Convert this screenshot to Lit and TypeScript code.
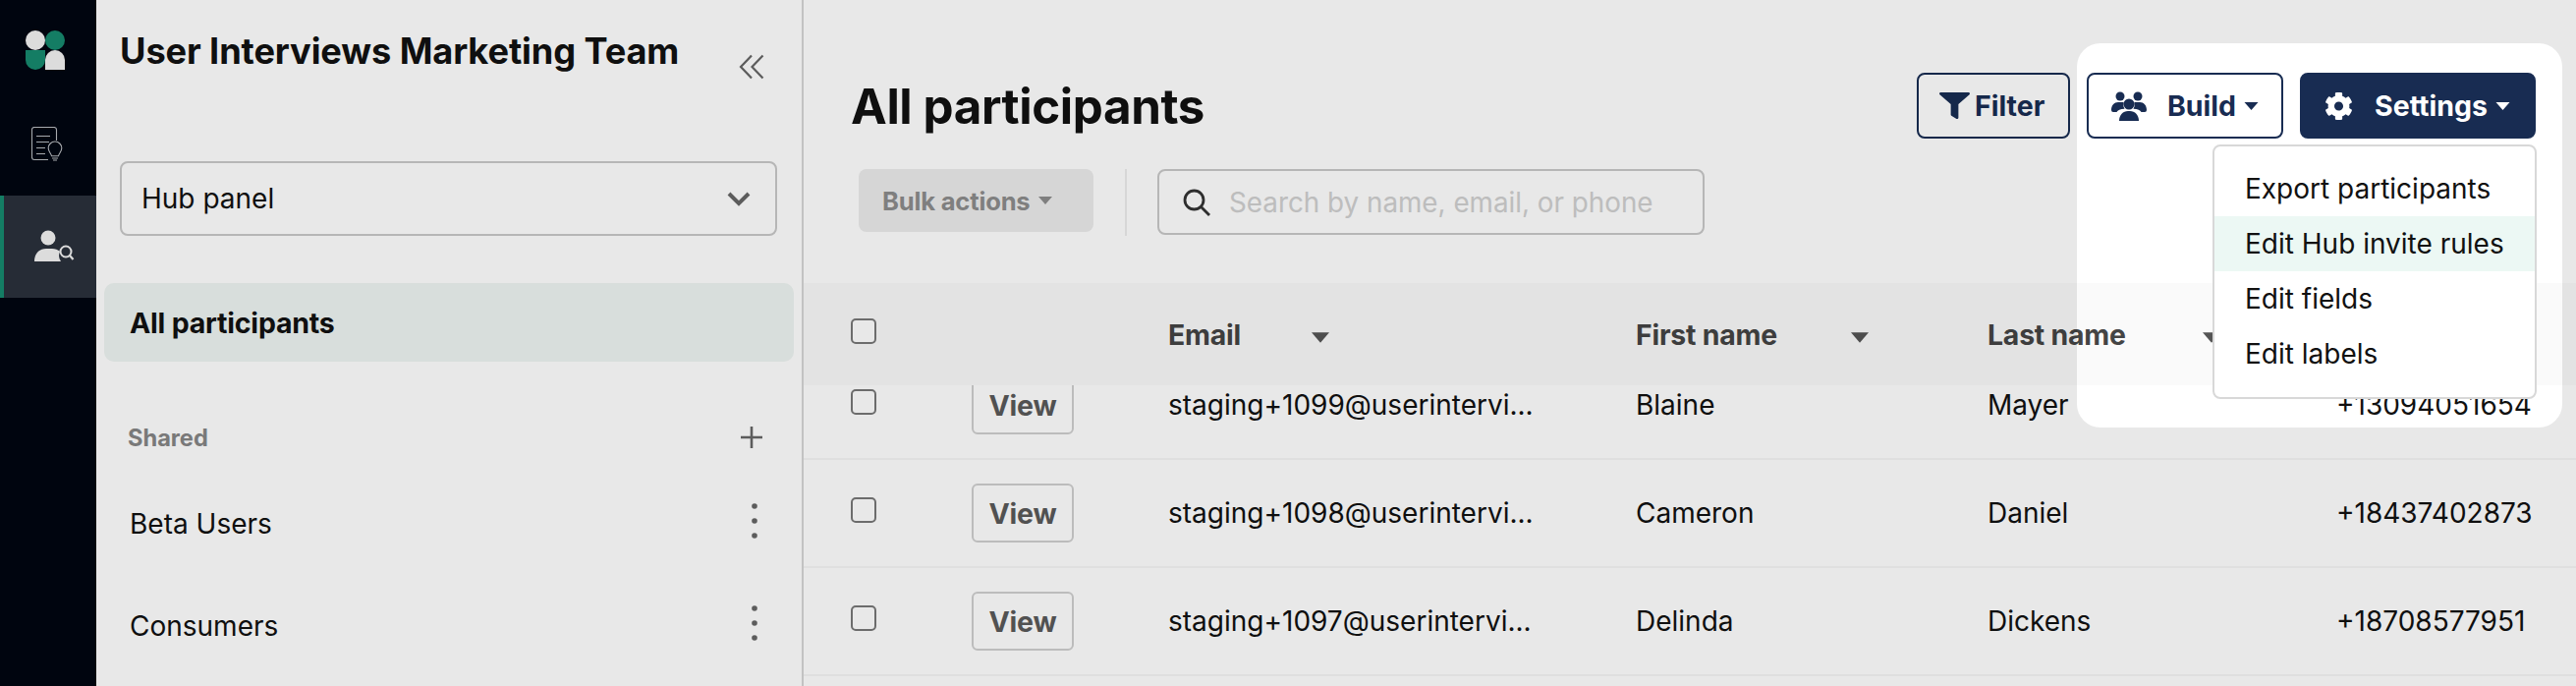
import { LitElement, html, css } from "lit";
import { customElement } from "lit/decorators.js";

const FUNNEL = "M487.976 0H24.028C2.71 0-8.047 25.866 7.058 40.971L192 225.941V432c0 7.831 3.821 15.17 10.237 19.662l80 55.98C298.02 518.69 320 507.493 320 487.98V225.941l184.947-184.97C520.021 25.896 509.338 0 487.976 0z";
const GEAR = "M487.4 315.7l-42.6-24.6c4.3-23.2 4.3-47 0-70.2l42.6-24.6c4.9-2.8 7.1-8.6 5.5-14-11.1-35.6-30-67.8-54.7-94.6-3.8-4.1-10-5.1-14.8-2.3L380.8 110c-17.9-15.4-38.5-27.3-60.8-35.1V25.8c0-5.6-3.9-10.5-9.4-11.7-36.7-8.2-74.3-7.8-109.2 0-5.5 1.2-9.4 6.1-9.4 11.7V75c-22.2 7.9-42.8 19.8-60.8 35.1L88.7 85.5c-4.9-2.8-11-1.9-14.8 2.3-24.7 26.7-43.6 58.9-54.7 94.6-1.7 5.4.6 11.2 5.5 14L67.3 221c-4.3 23.2-4.3 47 0 70.2l-42.6 24.6c-4.9 2.8-7.1 8.6-5.5 14 11.1 35.6 30 67.8 54.7 94.6 3.8 4.1 10 5.1 14.8 2.3l42.6-24.6c17.9 15.4 38.5 27.3 60.8 35.1v49.2c0 5.6 3.9 10.5 9.4 11.7 36.7 8.2 74.3 7.8 109.2 0 5.5-1.2 9.4-6.1 9.4-11.7v-49.2c22.2-7.9 42.8-19.8 60.8-35.1l42.6 24.6c4.9 2.8 11 1.9 14.8-2.3 24.7-26.7 43.6-58.9 54.7-94.6 1.5-5.5-.7-11.3-5.6-14.1zM256 336c-44.1 0-80-35.9-80-80s35.9-80 80-80 80 35.9 80 80-35.9 80-80 80z";

const caret = (cls: string) => html`<svg class=${cls} viewBox="0 0 14 8"><path d="M0 0h14L7 8z" fill="currentColor"/></svg>`;

const rows = [
  { email: "staging+1099@userintervi...", first: "Blaine", last: "Mayer", phone: "+13094051654" },
  { email: "staging+1098@userintervi...", first: "Cameron", last: "Daniel", phone: "+18437402873" },
  { email: "staging+1097@userintervi...", first: "Delinda", last: "Dickens", phone: "+18708577951" },
];

@customElement("app-root")
export class AppRoot extends LitElement {
  static styles = css`
    :host {
      display: block;
      position: relative;
      width: 2622px;
      height: 698px;
      overflow: hidden;
      background: #fff;
      color: #111;
      font-family: Inter, "Liberation Sans", sans-serif;
      font-size: 28px;
    }
    * { box-sizing: border-box; }
    .layout { display: flex; height: 698px; }

    .rail { width: 98px; flex: none; background: #010611; display: flex; flex-direction: column; }
    .logo { display: block; width: 40px; height: 40px; margin: 31px 0 0 26px; }
    .doc { display: block; width: 32px; height: 36px; margin: 58px 0 0 32px; }
    .rail-active {
      margin-top: 34px; height: 104px; background: #2a313c;
      border-left: 4px solid #178a6e; display: flex;
    }
    .usericon { width: 46px; height: 34px; margin: 35px 0 0 30px; }

    .side {
      width: 720px; flex: none; border-right: 2px solid #d6d6d6;
      display: flex; flex-direction: column; padding: 0 8px;
    }
    .team-row { display: flex; justify-content: space-between; padding: 28px 0 0 16px; height: 164px; }
    .team { margin: 0; font-size: 36.2px; line-height: 48px; font-weight: 700; letter-spacing: -0.1px; white-space: nowrap; }
    .collapse { width: 26px; height: 26px; margin: 27px 30px 0 0; color: #666; flex: none; }
    .select {
      margin: 0 17px 0 16px; height: 76px; border: 2px solid #c8c8c8; border-radius: 8px;
      display: flex; align-items: center; justify-content: space-between; padding: 0 25px 0 20px;
    }
    .chev { width: 24px; height: 15px; color: #666; }
    .nav-main {
      margin: 48px 0 0 0; height: 80px; border-radius: 10px; background: #eef5f2;
      display: flex; align-items: center; padding-left: 26px; font-weight: 700; font-size: 28.5px; letter-spacing: -0.2px;
    }
    .shared {
      margin-top: 59px; height: 36px; padding: 0 31px 0 24px;
      display: flex; align-items: center; justify-content: space-between;
      font-size: 23.6px; font-weight: 700; color: #858585;
    }
    .plus { width: 24px; height: 24px; color: #666; }
    .list-item {
      height: 104px; display: flex; align-items: center; justify-content: space-between;
      padding: 0 36px 0 26px;
    }
    .list-first { margin-top: 18px; }
    .dots { width: 8px; height: 38px; color: #666; margin-top: -6px; }

    .main { flex: 1; display: flex; flex-direction: column; min-width: 0; }
    .head-row { display: flex; align-items: center; height: 67px; margin-top: 74px; padding-left: 48px; }
    .title { margin: 0; font-size: 49.3px; font-weight: 700; letter-spacing: -0.4px; flex: 1; }
    .btn {
      height: 67px; border-radius: 8px; border: 2.5px solid #182c52; color: #182c52;
      background: #fff; display: flex; align-items: center; font-weight: 700; font-size: 28.5px;
    }
    .btn-filter { width: 156px; padding-left: 21px; gap: 5px; margin-right: 17px; }
    .btn-filter svg { width: 31px; height: 27px; flex: none; }
    .btn-build { width: 200px; padding-left: 23px; margin-right: 17px; }
    .btn-build .ic { width: 36px; height: 30px; margin-right: 21px; }
    .btn-settings { width: 240px; padding-left: 23px; background: #182c52; color: #fff; margin-right: 41px; }
    .btn-settings .ic { width: 29px; height: 30px; margin-right: 22px; }
    .caret-b { width: 15px; height: 8px; margin-left: 8px; }

    .tools { display: flex; align-items: flex-start; margin-top: 31px; height: 68px; padding-left: 56px; }
    .bulk {
      width: 239px; height: 64px; background: #ececec; border-radius: 8px; color: #8c8c8c;
      display: flex; align-items: center; padding-left: 24px; font-weight: 700; font-size: 25.6px; letter-spacing: -0.2px;
    }
    .caret-s { width: 14px; height: 8px; margin-left: 8px; }
    .sep { width: 2px; height: 68px; background: #ededed; margin: 0 31px 0 32px; }
    .search {
      width: 557px; height: 67px; border: 2px solid #c8c8c8; border-radius: 8px;
      display: flex; align-items: center; padding-left: 23px; color: #d0d0d0; font-size: 27.8px;
    }
    .search svg { width: 30px; height: 30px; margin-right: 18px; color: #333; flex: none; }

    .thead, .row {
      display: grid; grid-template-columns: 123px 200px 476px 358px 355px 1fr;
      padding-left: 48px;
    }
    .thead {
      position: relative; z-index: 1; margin-top: 48px; height: 104px; background: #fafafa;
      align-items: center; font-weight: 700; color: #444; font-size: 28.4px; letter-spacing: -0.2px;
    }
    .th { display: flex; align-items: center; justify-content: space-between; width: 164px; }
    .th-wide { width: 237px; }
    .sort { width: 18px; height: 11px; color: #555; margin-top: 6px; }
    .rows { margin-top: -34px; }
    .row { height: 110px; align-items: center; border-bottom: 2px solid #f6f6f6; }
    .cb {
      display: block; width: 26px; height: 26px; border: 2px solid #777; border-radius: 5px;
      background: #fff; margin-top: -6px;
    }
    .view {
      width: 104px; height: 60px; border: 2px solid #cfcfcf; border-radius: 6px;
      display: flex; align-items: center; justify-content: center;
      font-weight: 700; font-size: 28.5px; color: #5a5a5a; letter-spacing: -0.2px;
    }
    .menu {
      position: absolute; left: 2252px; top: 147px; width: 330px; height: 259px;
      background: #fff; border: 2px solid #d8d8d8; border-radius: 8px; padding: 15px 0; z-index: 2;
    }
    .mi { height: 56px; display: flex; align-items: center; padding: 0 0 1px 31px; white-space: nowrap; }
    .mi-on { background: #ecf8f4; }
    .spot {
      position: absolute; left: 2114px; top: 44px; width: 494px; height: 391px;
      border-radius: 24px; box-shadow: 0 0 0 4000px rgba(0,0,0,0.09); z-index: 3; pointer-events: none;
    }
  `;

  render() {
    return html`
      <div class="layout">
        <nav class="rail">
          <svg class="logo" viewBox="0 0 40 40">
            <circle cx="10" cy="10" r="10" fill="#f2f2f2"/>
            <circle cx="30" cy="10" r="10" fill="#178a6e"/>
            <path d="M0 20h20v10a10 10 0 0 1-20 0z" fill="#178a6e"/>
            <path d="M20 40V30a10 10 0 0 1 20 0v10z" fill="#f2f2f2"/>
          </svg>
          <svg class="doc" viewBox="0 0 32 36" fill="none" stroke="#b9bcc0" stroke-width="1.1">
            <path d="M17 33.5H3a2.5 2.5 0 0 1-2.5-2.5V3A2.5 2.5 0 0 1 3 .5h20A2.5 2.5 0 0 1 25.5 3v11"/>
            <path d="M5 9.5h14M5 15.5h13M5 21.5h9M5 27.5h9"/>
            <path d="M24 15a6.8 6.8 0 0 0-6.8 6.8c0 3.2 2.6 5 3.4 8h6.8c.8-3 3.4-4.8 3.4-8A6.8 6.8 0 0 0 24 15z"/>
            <path d="M21 32h6M22 34h4"/>
          </svg>
          <div class="rail-active">
            <svg class="usericon" viewBox="0 0 46 34">
              <circle cx="15" cy="8" r="7.5" fill="#f2f2f2"/>
              <path d="M1 32c0-8 5-13 12-13h6c3 0 6 1 8 3a10 10 0 0 0 1 10z" fill="#f2f2f2"/>
              <circle cx="33" cy="22" r="5.5" fill="none" stroke="#f2f2f2" stroke-width="2"/>
              <path d="M37 26l3.5 4" stroke="#f2f2f2" stroke-width="2.2" fill="none"/>
            </svg>
          </div>
        </nav>

        <aside class="side">
          <div class="team-row">
            <h2 class="team">User Interviews Marketing Team</h2>
            <svg class="collapse" viewBox="0 0 26 26" fill="none" stroke="currentColor" stroke-width="2.2">
              <path d="M13 1.5L2 13l11 11.5M24.5 1.5L13.5 13l11 11.5"/>
            </svg>
          </div>
          <div class="select">
            <span>Hub panel</span>
            <svg class="chev" viewBox="0 0 24 15" fill="none" stroke="currentColor" stroke-width="4"><path d="M2 2l10 10L22 2"/></svg>
          </div>
          <div class="nav-main">All participants</div>
          <div class="shared">
            <span>Shared</span>
            <svg class="plus" viewBox="0 0 24 24" stroke="currentColor" stroke-width="2.6"><path d="M12 1v22M1 12h22"/></svg>
          </div>
          <div class="list-item list-first">
            <span>Beta Users</span>
            <svg class="dots" viewBox="0 0 8 38" fill="currentColor"><circle cx="4" cy="4" r="2.8"/><circle cx="4" cy="19" r="2.8"/><circle cx="4" cy="34" r="2.8"/></svg>
          </div>
          <div class="list-item">
            <span>Consumers</span>
            <svg class="dots" viewBox="0 0 8 38" fill="currentColor"><circle cx="4" cy="4" r="2.8"/><circle cx="4" cy="19" r="2.8"/><circle cx="4" cy="34" r="2.8"/></svg>
          </div>
        </aside>

        <main class="main">
          <div class="head-row">
            <h1 class="title">All participants</h1>
            <div class="btn btn-filter">
              <svg viewBox="0 0 512 512" preserveAspectRatio="none"><path d=${FUNNEL} fill="currentColor"/></svg>
              <span>Filter</span>
            </div>
            <div class="btn btn-build">
              <svg class="ic" viewBox="0 0 36 30" fill="currentColor">
                <circle cx="9" cy="5" r="4.5"/><circle cx="27" cy="5" r="4.5"/><circle cx="18" cy="13" r="5.5"/>
                <path d="M0 19c0-5 3-8 7-8h4c.6 0 1.2.1 1.7.3a8 8 0 0 0 .8 6.4C9 18 6.5 19 5.5 21H2a2 2 0 0 1-2-2zM36 19c0-5-3-8-7-8h-4c-.6 0-1.2.1-1.7.3a8 8 0 0 1-.8 6.4c4.5.3 7 1.3 8 3.3h3.5a2 2 0 0 0 2-2z"/>
                <path d="M8 30c0-6 4-10 9-10h2c5 0 9 4 9 10z"/>
              </svg>
              <span>Build</span>
              ${caret("caret-b")}
            </div>
            <div class="btn btn-settings">
              <svg class="ic" viewBox="0 0 512 512"><path d=${GEAR} fill="currentColor"/></svg>
              <span>Settings</span>
              ${caret("caret-b")}
            </div>
          </div>
          <div class="tools">
            <div class="bulk"><span>Bulk actions</span>${caret("caret-s")}</div>
            <div class="sep"></div>
            <div class="search">
              <svg viewBox="0 0 30 30" fill="none" stroke="currentColor" stroke-width="2.8"><circle cx="12.5" cy="12.5" r="9.5"/><path d="M19.5 19.5L28 28"/></svg>
              <span>Search by name, email, or phone</span>
            </div>
          </div>
          <div class="thead">
            <span><span class="cb"></span></span>
            <span></span>
            <span class="th"><span>Email</span>${caret("sort")}</span>
            <span class="th th-wide"><span>First name</span>${caret("sort")}</span>
            <span class="th th-wide"><span>Last name</span>${caret("sort")}</span>
            <span></span>
          </div>
          <div class="rows">
            ${rows.map((r) => html`
              <div class="row">
                <span><span class="cb"></span></span>
                <span class="view">View</span>
                <span>${r.email}</span>
                <span>${r.first}</span>
                <span>${r.last}</span>
                <span>${r.phone}</span>
              </div>
            `)}
          </div>
        </main>
      </div>
      <div class="menu">
        <div class="mi">Export participants</div>
        <div class="mi mi-on">Edit Hub invite rules</div>
        <div class="mi">Edit fields</div>
        <div class="mi">Edit labels</div>
      </div>
      <div class="spot"></div>
    `;
  }
}
